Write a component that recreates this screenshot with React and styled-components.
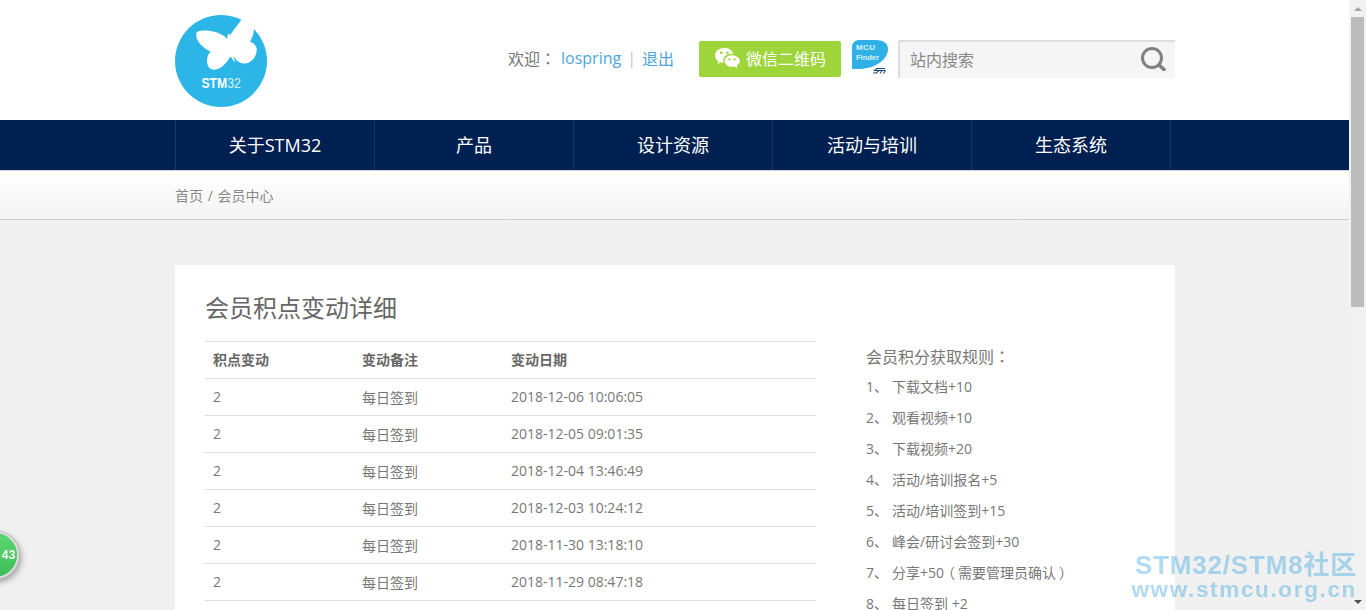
import React from 'react'
import styled, { createGlobalStyle } from 'styled-components'

const GlobalStyle = createGlobalStyle`
  body {
    margin: 0;
    padding-right: 16px;
    background: #f0f0f0;
    font-family: "Open Sans", "Noto Sans CJK SC", sans-serif;
    color: #666;
  }
`

const Wrap = styled.div`
  width: 1000px;
  margin: 0 auto;
`

const Header = styled.header`
  background: #fff;
  height: 120px;
`

const HeaderInner = styled(Wrap)`
  height: 120px;
  display: flex;
  align-items: center;
`

const LogoBox = styled.a`
  width: 92px;
  height: 92px;
  margin-top: 2px;
  flex: none;
`

const HeaderRight = styled.div`
  margin-left: auto;
  display: flex;
  align-items: center;
  height: 40px;
  margin-top: -2px;
`

const Welcome = styled.div`
  font-size: 16px;
  display: flex;
  align-items: center;
  color: #777;
  margin-right: 25px;
  padding-bottom: 2px;
`

const Punct = styled.span`
  font-family: "Noto Sans CJK TC", sans-serif;
`

// the full width brackets sit in the middle of their cell in the reference
const Bracket = styled.span`
  display: inline-block;
  transform: translateX(${p => (p.$close ? '3px' : '-3px')});
`

const UserLink = styled.a`
  color: #4ea6dc;
  margin-left: ${p => p.$gap || 0}px;
`

const Pipe = styled.span`
  color: #c4c6d6;
  margin: 0 6px;
`

const WechatButton = styled.a`
  width: 142px;
  height: 36px;
  background: #9dd53a;
  border-radius: 2px;
  color: #fff;
  font-size: 16px;
  display: flex;
  align-items: center;
  justify-content: center;
  gap: 5px;
  margin-right: 11px;
  padding-bottom: 2px;
  box-sizing: border-box;
`

const SearchBox = styled.div`
  width: 277px;
  height: 38px;
  margin-left: 10px;
  background: #f5f5f5;
  border-top: 2px solid #ddd;
  border-left: 2px solid #ddd;
  border-radius: 2px 0 0 0;
  display: flex;
  align-items: center;
  justify-content: space-between;
  padding: 0 9px 2px 10px;
  box-sizing: border-box;
  font-size: 16px;
  color: #888;
`

const Nav = styled.nav`
  background: #002051;
  height: 50px;
  border-bottom: 1px solid #d5d5d5;
`

const NavList = styled(Wrap)`
  display: flex;
  height: 50px;
  border-left: 1px solid #14395f;
  box-sizing: border-box;
  width: 996px;
  margin-left: calc((100% - 1000px) / 2);
`

const NavItem = styled.a`
  border-right: 1px solid #14395f;
  width: 198px;
  color: #fff;
  font-size: 18px;
  padding-bottom: 2px;
  box-sizing: content-box;
  height: 48px;
  display: flex;
  align-items: center;
  justify-content: center;
`

const Crumbs = styled.div`
  height: 48px;
  background: linear-gradient(#fff, #f3f3f3);
  border-bottom: 1px solid #cfcfcf;
`

const CrumbInner = styled(Wrap)`
  height: 48px;
  display: flex;
  align-items: center;
  font-size: 14px;
  word-spacing: 1px;
  color: #888;
  white-space: pre;
`

const Card = styled(Wrap)`
  margin-top: 45px;
  margin-bottom: 60px;
  background: #fff;
  padding: 30px;
  box-sizing: border-box;
  height: 906px;
`

const Title = styled.h1`
  margin: -2px 0 0;
  font-size: 24px;
  font-weight: normal;
  line-height: 29px;
  color: #666;
`

const Columns = styled.div`
  display: flex;
  margin-top: 19px;
`

const Table = styled.table`
  width: 611px;
  height: 260px;
  border-collapse: collapse;
  font-size: 14px;
  table-layout: fixed;
`

const HeadCell = styled.th`
  height: 37px;
  padding: 0 8px 2px;
  box-sizing: border-box;
  text-align: left;
  font-weight: bold;
  font-size: 14px;
  color: #666;
  border-top: 1px solid #ddd;
  border-bottom: 1px solid #ddd;
`

const Cell = styled.td`
  height: 37px;
  padding: 0 8px 1px;
  box-sizing: border-box;
  color: #777;
  border-bottom: 1px solid #ddd;
`

const Rules = styled.aside`
  margin-left: 50px;
  font-size: 14px;
  color: #777;
`

const RulesTitle = styled.div`
  font-size: 16px;
  line-height: 31px;
`

const RuleList = styled.ol`
  margin: -2px 0 0;
  padding: 0;
  list-style: none;
`

const Rule = styled.li`
  line-height: 31px;
  display: flex;
  white-space: pre;
`

const RuleNo = styled.span`
  width: 26px;
  flex: none;
`

const FloatBadge = styled.div`
  position: fixed;
  left: -29px;
  top: 531px;
  width: 48px;
  height: 48px;
  border-radius: 50%;
  background: linear-gradient(#5dd66f, #3dbd57);
  border: 2px solid #dcdcdc;
  box-shadow: 0 0 0 1px #b4b4b4, 2px 3px 6px rgba(0, 0, 0, 0.35);
  color: #fff;
  font-family: "Liberation Sans", sans-serif;
  font-size: 12px;
  font-weight: bold;
  letter-spacing: 0.5px;
  display: flex;
  align-items: center;
  justify-content: flex-end;
  padding-right: 1px;
  box-sizing: border-box;
`

const Watermark = styled.div`
  position: fixed;
  right: 9px;
  top: 551px;
  text-align: right;
  font-weight: bold;
  color: rgba(41, 160, 220, 0.38);
  font-family: "Liberation Sans", "Noto Sans CJK SC", sans-serif;
  pointer-events: none;
`

const WatermarkTop = styled.div`
  font-size: 26px;
  line-height: 28px;
  letter-spacing: 0.8px;
`

const WatermarkBottom = styled.div`
  font-size: 22.5px;
  line-height: 21px;
  letter-spacing: 1.65px;
`

// the browser's scrollbar does not show up in the screenshot, so it is drawn
const ScrollBar = styled.div`
  position: fixed;
  top: 0;
  right: 0;
  bottom: 0;
  width: 17px;
  background: #f1f1f1;
  display: flex;
  flex-direction: column;
  align-items: center;
`

const ScrollArrow = styled.div`
  height: 17px;
  display: flex;
  align-items: center;
  justify-content: center;
  margin-top: ${p => (p.$down ? 'auto' : '0')};
  &::before {
    content: '';
    border-left: 4px solid transparent;
    border-right: 4px solid transparent;
    border-bottom: ${p => (p.$down ? '0' : '4px solid #a3a3a3')};
    border-top: ${p => (p.$down ? '4px solid #505050' : '0')};
  }
`

const ScrollThumb = styled.div`
  width: 13px;
  height: 290px;
  background: #bcbcbc;
`

const Logo = () => (
  <svg width="92" height="92" viewBox="0 0 92 92">
    <circle cx="46" cy="46" r="46" fill="#2cb6e8" />
    <path
      fill="#fff"
      d="M21.700 17 C30 14 42 16 50 21.700 L52 24 L53 18.500 L55 20 L67 4 L79 13 C79 19 77 23 75 26.700 C79 28 82 31 81.700 35 C81.500 42 76 49 69 48.500 C64 48 60 45 58.300 40 L60 48 L56 42 L55 41.700 C53 46 49 51 44 53.500 C40 55.500 35 55 33 51 C31 46 32 40 35.700 36.700 C30 34 25 30 22 24 C21 21 21 19 21.700 17 Z"
    />
    <text transform="translate(26.500 73) scale(0.87 1)" fontSize="14" fontFamily="Liberation Sans, sans-serif" fill="#fff">
      <tspan fontWeight="bold">STM</tspan>
      <tspan fill="#d5f0fb">32</tspan>
    </text>
  </svg>
)

const WechatIcon = () => (
  <svg width="27" height="22" viewBox="0 0 28 23">
    <path fill="#fff" d="M11 1 C5 1 1 4.500 1 8.800 C1 11.300 2.300 13.300 4.500 14.700 L3.500 17.800 L7 16 C8 16.300 9 16.500 10 16.500 C9.700 15.600 9.600 14.800 9.600 14 C9.600 10 13.300 7 18 7 L20 7.200 C19 3.600 15.500 1 11 1 Z" />
    <path fill="#fff" d="M18.500 8.500 C14.300 8.500 11 11.200 11 14.600 C11 18 14.300 20.700 18.500 20.700 C19.400 20.700 20.300 20.500 21.100 20.300 L24.500 22.200 L23.600 19.300 C25.700 18.100 27 16.500 27 14.600 C27 11.200 22.700 8.500 18.500 8.500 Z" />
    <circle cx="7.500" cy="6" r="1.400" fill="#9dd53a" />
    <circle cx="14" cy="6" r="1.400" fill="#9dd53a" />
    <circle cx="16" cy="13" r="1.200" fill="#9dd53a" />
    <circle cx="21.500" cy="13" r="1.200" fill="#9dd53a" />
  </svg>
)

const McuFinder = () => (
  <svg width="36" height="38" viewBox="0 0 36 38">
    <path fill="#2fb1e8" d="M7 0 H24 C32 0 36 4 36 9 C36 19 24 29 6 29 H0 V7 C0 3 3 0 7 0 Z" />
    <text x="4" y="10.300" fontSize="8" fontWeight="bold" fontFamily="Liberation Sans, sans-serif" fill="#dff3fc" letterSpacing="0.4">MCU</text>
    <text x="4" y="19.500" fontSize="7.500" fontWeight="bold" fontFamily="Liberation Sans, sans-serif" fill="#dff3fc">Finder</text>
    <path fill="none" stroke="#1c4a7a" strokeWidth="1.100" d="M33 28.500 H25 L22.500 30.500 H27 L24.500 33 H21 M27.500 30.500 H33 M30 30.500 L28 33.500 M33.500 30.500 L31.500 33.500" />
  </svg>
)

const SearchIcon = () => (
  <svg width="25" height="24" viewBox="0 0 25 24">
    <circle cx="11" cy="11" r="9.500" fill="none" stroke="#808080" strokeWidth="3" />
    <path d="M18 18 L23 22.500" stroke="#808080" strokeWidth="3.600" strokeLinecap="round" />
  </svg>
)

const navItems = ['关于STM32', '产品', '设计资源', '活动与培训', '生态系统']

const rows = [
  ['2', '每日签到', '2018-12-06 10:06:05'],
  ['2', '每日签到', '2018-12-05 09:01:35'],
  ['2', '每日签到', '2018-12-04 13:46:49'],
  ['2', '每日签到', '2018-12-03 10:24:12'],
  ['2', '每日签到', '2018-11-30 13:18:10'],
  ['2', '每日签到', '2018-11-29 08:47:18'],
]

const rules = [
  '下载文档+10',
  '观看视频+10',
  '下载视频+20',
  '活动/培训报名+5',
  '活动/培训签到+15',
  '峰会/研讨会签到+30',
  <>分享+50<Bracket>（</Bracket>需要管理员确认<Bracket $close>）</Bracket></>,
  '每日签到 +2',
]

const App = () => (
  <>
    <GlobalStyle />
    <Header>
      <HeaderInner>
        <LogoBox><Logo /></LogoBox>
        <HeaderRight>
          <Welcome>
            欢迎<Punct>：</Punct>
            <UserLink $gap={5}>lospring</UserLink>
            <Pipe>|</Pipe>
            <UserLink>退出</UserLink>
          </Welcome>
          <WechatButton><WechatIcon />微信二维码</WechatButton>
          <McuFinder />
          <SearchBox>站内搜索<SearchIcon /></SearchBox>
        </HeaderRight>
      </HeaderInner>
    </Header>
    <Nav>
      <NavList>
        {navItems.map(item => <NavItem key={item}>{item}</NavItem>)}
      </NavList>
    </Nav>
    <Crumbs>
      <CrumbInner>首页 / 会员中心</CrumbInner>
    </Crumbs>
    <Card>
      <Title>会员积点变动详细</Title>
      <Columns>
        <Table>
          <colgroup>
            <col width="149" />
            <col width="149" />
            <col />
          </colgroup>
          <thead>
            <tr>
              <HeadCell>积点变动</HeadCell>
              <HeadCell>变动备注</HeadCell>
              <HeadCell>变动日期</HeadCell>
            </tr>
          </thead>
          <tbody>
            {rows.map(r => (
              <tr key={r[2]}>
                <Cell>{r[0]}</Cell>
                <Cell>{r[1]}</Cell>
                <Cell>{r[2]}</Cell>
              </tr>
            ))}
          </tbody>
        </Table>
        <Rules>
          <RulesTitle>会员积分获取规则<Punct>：</Punct></RulesTitle>
          <RuleList>
            {rules.map((rule, i) => (
              <Rule key={i}><RuleNo>{i + 1}、</RuleNo><span>{rule}</span></Rule>
            ))}
          </RuleList>
        </Rules>
      </Columns>
    </Card>
    <FloatBadge>43</FloatBadge>
    <ScrollBar>
      <ScrollArrow />
      <ScrollThumb />
      <ScrollArrow $down />
    </ScrollBar>
    <Watermark>
      <WatermarkTop>STM32/STM8社区</WatermarkTop>
      <WatermarkBottom>www.stmcu.org.cn</WatermarkBottom>
    </Watermark>
  </>
)

export default App
